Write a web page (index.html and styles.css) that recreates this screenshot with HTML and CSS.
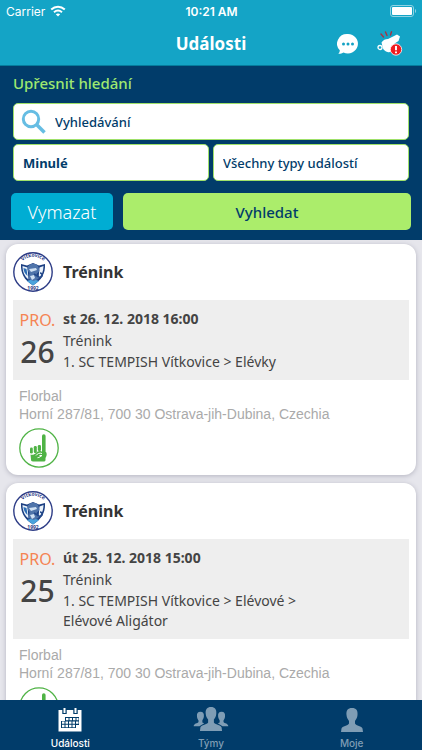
FILE: index.html
```html
<!DOCTYPE html>
<html lang="cs">
<head>
<meta charset="utf-8">
<meta name="viewport" content="width=device-width, initial-scale=1">
<title>Události</title>
<link rel="stylesheet" href="styles.css">
</head>
<body>
<svg class="sprite" aria-hidden="true">
  <symbol id="club" viewBox="0 0 40 40">
    <circle cx="20" cy="20" r="19.2" fill="#fff" stroke="#2d3c86" stroke-width="1.4"/>
    <path d="M8 12l6 1.500 6-2.500 6 2.500 6-1.500c.5 9-3 16-12 21.500C11 28 7.500 21 8 12z" fill="#1c3f82"/>
    <path d="M9.500 14l5 1.500 1 12c-4-3-6-8-6-13.500zM30.500 14l-4 1.500-1 11c3-3 5-7 5-12.500z" fill="#e9f2fa"/>
    <path d="M10.500 16l3 1 1 7c-2.500-2-4-5-4-8z" fill="#2c6db4"/>
    <path d="M14 29l6-2 6 2-6 4.500z" fill="#4aa3dc"/>
    <path d="M14.500 15c2-4.500 10-4.500 11 0l1 4-3 3 2 5-5 2-5-2 1-6-2-3z" fill="#4f74aa"/>
    <path d="M16 17l7-1 1 2-6 2zM17 24l4-1 1 3-3 2z" fill="#cfe0f2"/>
    <path d="M21 22l5 3c4 1 4-4 1-4" fill="none" stroke="#244a8c" stroke-width="1.500"/>
  </symbol>
  <symbol id="finger" viewBox="0 0 40 40">
    <circle cx="20" cy="20" r="19.2" fill="#fff" stroke="#4fb345" stroke-width="1.300"/>
    <g fill="#4fb345">
      <path d="M23 8a1.800 1.800 0 0 1 3.600 0v16H23z"/>
      <rect x="11" y="19.500" width="2.800" height="6" rx="1.300"/>
      <rect x="14.800" y="18" width="3" height="7" rx="1.300"/>
      <rect x="18.800" y="17" width="3.200" height="6" rx="1.300"/>
      <path d="M11.500 26.500c2 .8 4 0 5.500-1.500 1.500-1.800 3.500-2.500 5.500-1.500l4.500.5c1 1 1 4-.5 6v2c0 1-1 1.500-2 1.500H14c-1.500 0-2-1-2-2z"/>
    </g>
    <path d="M17 27.500c1.500-2 3.500-2.800 6-2M20.500 27.500h2.500c-1.500 1-2.500 2-4.500 2.200" fill="none" stroke="#fff" stroke-width="1"/>
  </symbol>
  <defs><path id="club-arc" d="M6.500 13A15.200 15.200 0 0 1 33.500 13"/></defs>
</svg>

<header class="top">
  <div class="status">
    <span class="carrier">Carrier
      <svg width="16" height="12" viewBox="0 0 16 12" fill="none" stroke="#fff" stroke-width="2"><path d="M1.200 4.500c4-3.700 9.600-3.700 13.600 0M4 7.300c2.400-2.100 5.600-2.100 8 0"/><path d="M8 11.500L5.800 9.300c1.300-1.100 3.100-1.100 4.400 0z" fill="#fff" stroke="none"/></svg>
    </span>
    <span class="clock">10:21 AM</span>
    <span class="battery"><svg width="27" height="12" viewBox="0 0 27 12"><rect x=".5" y=".5" width="23" height="11" rx="2.500" fill="none" stroke="#8fd3e4"/><rect x="2" y="2" width="20" height="8" rx="1" fill="#fff"/><path d="M25 4c1.500.5 1.500 3.500 0 4z" fill="#8fd3e4"/></svg></span>
  </div>
  <div class="titlebar">
    <h1>Události</h1>
    <div class="actions">
      <button type="button" aria-label="Zprávy"><svg width="22" height="22" viewBox="0 0 22 22"><path d="M11 1a10 9.700 0 1 1-4.500 18.400C5 20.500 3 21 1.300 20.800c1-.8 1.500-2 1.500-3.500A10 9.700 0 0 1 11 1z" fill="#fff"/><g fill="#14a2c4"><circle cx="6.500" cy="11" r="1.500"/><circle cx="11" cy="11" r="1.500"/><circle cx="15.500" cy="11" r="1.500"/></g></svg></button>
      <button type="button" aria-label="Upozornění"><svg width="26" height="26" viewBox="0 0 26 26"><g stroke="#a83244" stroke-width="1.400" stroke-linecap="round"><path d="M4 3l2.500 3M8.500 1l1.500 3.500M14.500 .8l-1 3.200"/></g><path d="M4.500 11.500c1.500-2.500 4-3.500 6.500-3.500l9-4.500 3 2-1.500 4.500-4 2.500c1 6-3 9.500-7 8.500-2-.5-4-2-4.700-4" fill="#fff"/><circle cx="3" cy="16.500" r="2" fill="none" stroke="#fff" stroke-width="1.300"/><circle cx="19" cy="18.500" r="5.700" fill="#f01c20" stroke="#fff" stroke-width=".8"/><path d="M19 15v4.300M19 20.600v1.700" stroke="#fff" stroke-width="1.900"/></svg></button>
    </div>
  </div>
</header>

<form class="search">
  <h2>Upřesnit hledání</h2>
  <div class="fields">
    <label class="field query">
      <svg width="26" height="26" viewBox="0 0 26 26" fill="none" stroke="#66bde3"><circle cx="10" cy="10" r="7.700" stroke-width="3"/><path d="M15.500 15.500l8 8" stroke-width="3.600"/></svg>
      <input type="text" placeholder="Vyhledávání" aria-label="Vyhledávání">
    </label>
    <select class="field strong" aria-label="Období"><option>Minulé</option></select>
    <select class="field" aria-label="Typ události"><option>Všechny typy událostí</option></select>
  </div>
  <div class="buttons">
    <button type="reset" class="clear">Vymazat</button>
    <button type="submit" class="submit">Vyhledat</button>
  </div>
</form>

<main class="list">
  <article class="card">
    <header class="card-head">
      <svg class="badge" viewBox="0 0 40 40"><use href="#club"/><text class="club-text"><textPath href="#club-arc" startOffset="50%" text-anchor="middle">Vítkovice</textPath></text><text class="club-text" x="20" y="38" text-anchor="middle">1992</text></svg>
      <h3>Trénink</h3>
    </header>
    <div class="event">
      <div class="date"><span class="month">PRO.</span><span class="day">26</span></div>
      <div class="info"><strong>st 26. 12. 2018 16:00</strong><span>Trénink</span><p>1. SC TEMPISH Vítkovice &gt; Elévky</p></div>
    </div>
    <div class="place"><p>Florbal</p><p>Horní 287/81, 700 30 Ostrava-jih-Dubina, Czechia</p>
      <button type="button" aria-label="Zúčastním se"><svg class="badge"><use href="#finger"/></svg></button></div>
  </article>
  <article class="card">
    <header class="card-head">
      <svg class="badge" viewBox="0 0 40 40"><use href="#club"/><text class="club-text"><textPath href="#club-arc" startOffset="50%" text-anchor="middle">Vítkovice</textPath></text><text class="club-text" x="20" y="38" text-anchor="middle">1992</text></svg>
      <h3>Trénink</h3>
    </header>
    <div class="event">
      <div class="date"><span class="month">PRO.</span><span class="day">25</span></div>
      <div class="info"><strong>út 25. 12. 2018 15:00</strong><span>Trénink</span><p>1. SC TEMPISH Vítkovice &gt; Elévové &gt;<br>Elévové Aligátor</p></div>
    </div>
    <div class="place"><p>Florbal</p><p>Horní 287/81, 700 30 Ostrava-jih-Dubina, Czechia</p>
      <button type="button" aria-label="Zúčastním se"><svg class="badge"><use href="#finger"/></svg></button></div>
  </article>
</main>

<nav class="tabs">
  <a href="#udalosti" class="active">
    <svg width="24" height="24" viewBox="0 0 24 24"><path d="M.5 2h23v21.500H.5z" fill="#fff"/><path d="M6.500 1v5M17.500 1v5" stroke="#013c6a" stroke-width="4.400"/><path d="M6.500 0v5M17.500 0v5" stroke="#fff" stroke-width="2"/><path d="M7 9h14v8h-3v3H3v-7h4z" fill="#013c6a"/><path d="M8 11.200h12.500M4 14.600h16.500M4 18h13" stroke="#fff" stroke-width="2.300" stroke-dasharray="2.500 1"/></svg>
    Události</a>
  <a href="#tymy">
    <svg width="38" height="25" viewBox="0 0 38 26" fill="currentColor"><path d="M19 0c4 0 6 2.500 5.500 7-.2 3-1.500 4.500-2.500 6v3c1 2 7 2.500 8 5l.5 4h-23L8 21c1-2.500 7-3 8-5v-3c-1-1.500-2.300-3-2.500-6C13 2.500 15 0 19 0z"/><path d="M8 5c2.800 0 4 2 3.600 5-.2 2-1 3-1.600 4v2l2 1-5 3H1c0-3 4-3 5-4.500V14c-.8-1-1.400-2-1.600-4C4 7 5.200 5 8 5zM30 5c-2.800 0-4 2-3.600 5 .2 2 1 3 1.600 4v2l-2 1 5 3h6c0-3-4-3-5-4.500V14c.8-1 1.400-2 1.600-4 .4-3-.8-5-3.600-5z"/></svg>
    Týmy</a>
  <a href="#moje">
    <svg width="22" height="24" viewBox="0 0 22 24" fill="currentColor"><path d="M11 0c4.200 0 6 2.600 5.500 7-.2 3-1.500 4.500-2.500 6v2.500c1 2.500 7 2.500 7.500 5L22 24H0l.5-3.500c.5-2.500 6.500-2.500 7.500-5V13c-1-1.500-2.300-3-2.500-6C5 2.600 6.800 0 11 0z"/></svg>
    Moje</a>
</nav>
</body>
</html>
```
FILE: styles.css
```css
* { box-sizing: border-box; }

body {
  margin: 0;
  height: 100vh;
  display: flex;
  flex-direction: column;
  background: #e6e6ec;
  color: #444;
  font-family: "Noto Sans", sans-serif;
  font-size: 14px;
}

h1, h2, h3, p { margin: 0; }
svg { display: block; }
button, input, select { font: inherit; color: inherit; }
button { border: 0; padding: 0; background: none; cursor: pointer; }

.sprite { position: absolute; width: 0; height: 0; }
.club-text { font-size: 5px; font-weight: 700; fill: #2d3c86; }

/* Header */
.top { background: #14a4c6; color: #fff; border-bottom: 1px solid #057c9c; }
.status {
  display: grid;
  grid-template-columns: 1fr auto 1fr;
  align-items: center;
  height: 22px;
  padding: 0 5px 0 6px;
  font: 12px Inter, sans-serif;
}
.carrier { display: flex; align-items: center; gap: 5px; }
.clock { font-weight: 600; }
.battery { justify-self: end; }
.titlebar {
  display: grid;
  grid-template-columns: 1fr auto 1fr;
  align-items: center;
  height: 43px;
  padding: 0 19px;
}
.titlebar h1 { grid-column: 2; font-size: 17px; line-height: 24px; }
.actions { display: flex; justify-content: flex-end; align-items: center; gap: 18px; }

/* Search */
.search { padding: 5px 13px 10px; background: #013c6a; color: #013c6a; }
.search h2 { color: #9fe870; font-size: 15px; font-weight: 500; line-height: 24px; }
.fields { display: grid; grid-template-columns: 1fr 1fr; gap: 4px; margin-top: 8px; }
.field {
  height: 37px;
  min-width: 0;
  padding: 0 9px;
  border: 1px solid #9fe06a;
  border-radius: 5px;
  background: #fff;
  font-size: 13px;
  font-weight: 500;
  appearance: none;
}
.query { grid-column: 1 / -1; display: flex; align-items: center; gap: 8px; padding: 0 7px; }
.query input { flex: 1; min-width: 0; border: 0; padding: 0; outline: 0; background: none; }
.query input::placeholder { color: inherit; opacity: 1; }
.strong { font-weight: 700; }
.buttons { display: grid; grid-template-columns: 102px 1fr; gap: 10px; margin: 12px -2px 0; }
.buttons button { height: 37px; border-radius: 5px; }
.buttons .clear { background: #00add3; color: #fff; font-size: 18px; font-weight: 300; }
.buttons .submit { background: #abed6b; font-size: 15px; font-weight: 500; }

/* Event list */
.list {
  flex: 1;
  min-height: 0;
  overflow-y: auto;
  scrollbar-width: none;
  display: flex;
  flex-direction: column;
  gap: 8px;
  padding: 4px 6px;
}
.card {
  flex: none;
  padding: 8px 7px 7px;
  border-radius: 12px;
  background: #fff;
  box-shadow: 0 1px 5px #b4b4c0;
}
.badge { width: 40px; height: 40px; }
.card-head { display: flex; align-items: center; gap: 10px; margin-bottom: 8px; }
.card-head h3 { color: #333; font-size: 16px; line-height: 24px; }
.event { display: flex; gap: 7px; padding: 8px 6px; background: #eee; }
.date { display: flex; flex-direction: column; align-items: center; width: 37px; }
.month { color: #f58453; font-size: 16px; line-height: 24px; }
.day { font-size: 30px; font-weight: 500; line-height: 40px; }
.info { display: flex; flex-direction: column; }
.info strong, .info span { line-height: 22px; }
.info p { line-height: 20px; }
.place {
  padding: 7px 6px 0;
  color: #aaa;
  font-family: "Liberation Sans", sans-serif;
  line-height: 18px;
}
.place button { display: block; margin-top: 5px; }

/* Bottom tabs */
.tabs {
  display: grid;
  grid-template-columns: repeat(3, 1fr);
  height: 50px;
  background: #013c6a;
}
.tabs a {
  display: flex;
  flex-direction: column;
  align-items: center;
  justify-content: flex-end;
  gap: 4px;
  color: #7f9db5;
  font: 500 10px/14px Inter, sans-serif;
  text-decoration: none;
}
.tabs .active { color: #fff; }
```
